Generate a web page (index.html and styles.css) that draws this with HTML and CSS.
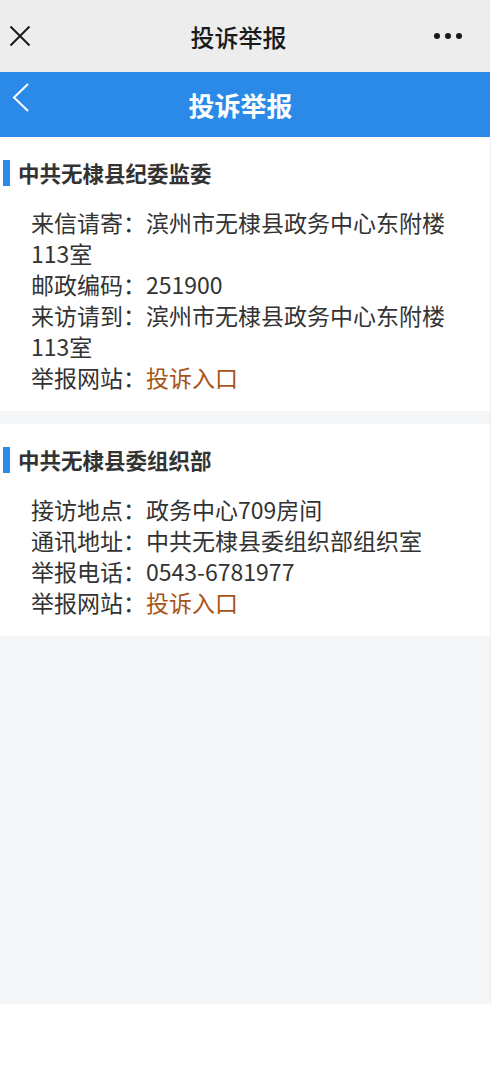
FILE: index.html
```html
<!DOCTYPE html>
<html lang="zh-CN">
<head>
  <meta charset="UTF-8" />
  <meta name="viewport" content="width=device-width, initial-scale=1.0"/>
  <title>投诉举报</title>
  <link rel="stylesheet" href="styles.css">
</head>
<body>
  <div class="page">
    <!-- app top bar -->
    <div class="topbar">
      <svg class="close" width="22" height="22" viewBox="0 0 22 22">
        <path d="M1.5 1.5 L20.5 20.5 M20.5 1.5 L1.5 20.5" stroke="#1a1a1a" stroke-width="2" fill="none"/>
      </svg>
      <div class="topbar-title">投诉举报</div>
      <div class="more"><span></span><span></span><span></span></div>
    </div>

    <!-- page header -->
    <div class="header">
      <svg class="back" width="18" height="30" viewBox="0 0 18 30">
        <path d="M16 1 L2 14.5 L16 28" stroke="#fff" stroke-width="2" fill="none"/>
      </svg>
      <div class="header-title">投诉举报</div>
    </div>

    <div class="content">
      <div class="section">
        <h2 class="section-title">中共无棣县纪委监委</h2>
        <div class="info">
          <p>来信请寄：滨州市无棣县政务中心东附楼113室</p>
          <p>邮政编码：251900</p>
          <p>来访请到：滨州市无棣县政务中心东附楼113室</p>
          <p>举报网站：<a href="#">投诉入口</a></p>
        </div>
      </div>

      <div class="section">
        <h2 class="section-title">中共无棣县委组织部</h2>
        <div class="info">
          <p>接访地点：政务中心709房间</p>
          <p>通讯地址：中共无棣县委组织部组织室</p>
          <p>举报电话：0543-6781977</p>
          <p>举报网站：<a href="#">投诉入口</a></p>
        </div>
      </div>
    </div>
  </div>
</body>
</html>
```

FILE: styles.css
```css
body {
  margin: 0;
  background: #fff;
  font-family: "Noto Sans CJK SC", "Noto Sans", sans-serif;
  color: #333;
}
.page {
  width: 490px;
}
.topbar {
  height: 72px;
  background: #ededed;
  display: flex;
  align-items: center;
  justify-content: space-between;
  padding: 0 28px 0 9px;
}
.close {
  display: block;
}
.topbar-title {
  font-size: 24px;
  font-weight: 500;
  color: #1a1a1a;
  margin-left: 12px;
}
.more {
  display: flex;
  gap: 5px;
}
.more span {
  width: 6px;
  height: 6px;
  border-radius: 50%;
  background: #1a1a1a;
}
.header {
  height: 65px;
  background: #2b8ae8;
  display: flex;
  align-items: center;
  padding-left: 12px;
  position: relative;
}
.back {
  display: block;
  margin-top: -14px;
}
.header-title {
  position: absolute;
  left: 0;
  right: 9px;
  text-align: center;
  font-size: 26px;
  font-weight: bold;
  color: #fff;
}
.content {
  background: #f5f6f8;
  min-height: 867px;
  display: flex;
  flex-direction: column;
  gap: 13px;
  box-shadow: 1px 1px 0 #eceef1;
}
.section {
  background: #fff;
  padding: 23px 0 18px;
}
.section-title {
  margin: 0 0 0 3px;
  font-size: 21.5px;
  font-weight: bold;
  line-height: 26px;
  color: #333;
  border-left: 7px solid #2b8ae8;
  padding-left: 8px;
}
.info {
  margin-top: 21px;
  padding: 0 31px;
}
.info p {
  margin: 0;
  font-size: 23px;
  line-height: 31px;
}
.info a {
  color: #a85418;
  text-decoration: none;
}
```
